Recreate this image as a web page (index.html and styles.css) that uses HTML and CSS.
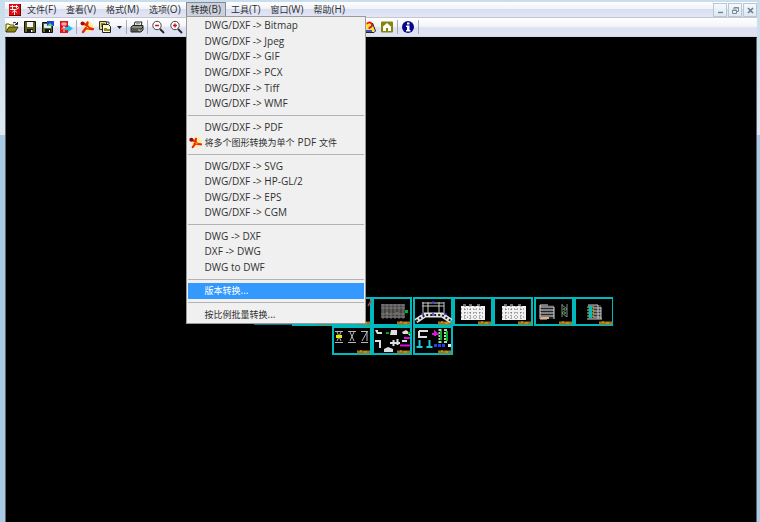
FILE: index.html
```html
<!DOCTYPE html>
<html lang="zh-CN">
<head>
<meta charset="utf-8">
<meta name="viewport" content="width=device-width, initial-scale=1">
<title>DWG/DXF</title>
<link rel="stylesheet" href="styles.css">
</head>
<body>
<div class="window">
  <header class="menubar">
    <svg class="app-icon" viewBox="0 0 12 12" aria-hidden="true"><rect width="12" height="12" fill="#d90f14"/><path d="M1 2.500h8M3.500 1v5M7.500 1v3M1 5.500h6l3-2M5.500 5v6M3 8.500l2.500-2L8 8.500" stroke="#fff" fill="none" stroke-width=".9"/><path d="M0 11.500h12M11.500 0v12" stroke="#700" stroke-width="1"/></svg>
    <nav class="menus">
      <button class="menu-button">文件<span>(F)</span></button>
      <button class="menu-button">查看<span>(V)</span></button>
      <button class="menu-button">格式<span>(M)</span></button>
      <button class="menu-button">选项<span>(O)</span></button>
      <div class="menu-anchor">
        <button class="menu-button open" aria-expanded="true">转换<span>(B)</span></button>
        <div class="dropdown" role="menu">
          <button class="item" role="menuitem"><span>DWG/DXF -&gt; Bitmap</span></button>
          <button class="item" role="menuitem"><span>DWG/DXF -&gt; Jpeg</span></button>
          <button class="item" role="menuitem"><span>DWG/DXF -&gt; GIF</span></button>
          <button class="item" role="menuitem"><span>DWG/DXF -&gt; PCX</span></button>
          <button class="item" role="menuitem"><span>DWG/DXF -&gt; Tiff</span></button>
          <button class="item" role="menuitem"><span>DWG/DXF -&gt; WMF</span></button>
          <div class="rule" role="separator"></div>
          <button class="item" role="menuitem"><span>DWG/DXF -&gt; PDF</span></button>
          <button class="item" role="menuitem"><svg class="item-icon" viewBox="0 0 14 14" aria-hidden="true"><circle cx="8" cy="6.500" r="5.500" fill="#fff08a"/><path d="M3 4l4 2 2 2.500 4 .5M7 6l.5-3M7 8l-3 4M6 8l6 1" stroke="#e8260f" stroke-width="2.200" fill="none" stroke-linecap="round"/><circle cx="2.500" cy="4" r="2.200" fill="#8e0c10"/><path d="M7 7.500l2 .5" stroke="#ffd53a"/></svg>将多个图形转换为单个<span class="mid">PDF</span>文件</button>
          <div class="rule" role="separator"></div>
          <button class="item" role="menuitem"><span>DWG/DXF -&gt; SVG</span></button>
          <button class="item" role="menuitem"><span>DWG/DXF -&gt; HP-GL/2</span></button>
          <button class="item" role="menuitem"><span>DWG/DXF -&gt; EPS</span></button>
          <button class="item" role="menuitem"><span>DWG/DXF -&gt; CGM</span></button>
          <div class="rule" role="separator"></div>
          <button class="item" role="menuitem"><span>DWG -&gt; DXF</span></button>
          <button class="item" role="menuitem"><span>DXF -&gt; DWG</span></button>
          <button class="item" role="menuitem"><span>DWG to DWF</span></button>
          <div class="rule" role="separator"></div>
          <button class="item selected" role="menuitem">版本转换<span>...</span></button>
          <div class="rule" role="separator"></div>
          <button class="item" role="menuitem">按比例批量转换<span>...</span></button>
        </div>
      </div>
      <button class="menu-button">工具<span>(T)</span></button>
      <button class="menu-button">窗口<span>(W)</span></button>
      <button class="menu-button">帮助<span>(H)</span></button>
    </nav>
    <div class="controls">
      <button class="control" aria-label="最小化"><svg viewBox="0 0 12 12"><path d="M4 8.500h5" stroke="#6f808d" stroke-width="1.400"/></svg></button>
      <button class="control" aria-label="还原"><svg viewBox="0 0 12 12"><path d="M5 5V3.500h4.500v4H8M5 4h4.500M3.500 6h4v3.500h-4zM3.500 6.500h4" stroke="#7c8c99" fill="none"/></svg></button>
      <button class="control" aria-label="关闭"><svg viewBox="0 0 12 12"><path d="M4 4l5 5M9 4l-5 5" stroke="#687987" stroke-width="1.600"/></svg></button>
    </div>
  </header>

  <div class="toolbar">
    <div class="tools">
      <button class="tool" aria-label="打开"><svg viewBox="0 0 14 14"><path d="M1 12V4h3l1 1h4v2" fill="#fff79a" stroke="#55500a"/><path d="M1 12l3-5h9l-3 5z" fill="#8c8616" stroke="#3c3905"/><path d="M8 3q2-2 4 1M12.500 2v2.500H10" stroke="#222" fill="none"/></svg></button>
      <button class="tool" aria-label="保存"><svg viewBox="0 0 14 14"><path d="M1.500 1.500h11v11h-11z" fill="#5e6412" stroke="#111"/><path d="M4 2h6v5H4z" fill="#f4f5f8"/><path d="M4 9h6v4H4z" fill="#171717"/><path d="M8 10h1.500v2H8z" fill="#fff"/></svg></button>
      <button class="tool" aria-label="另存为"><svg viewBox="0 0 14 14"><path d="M1.500 2.500h10v10h-10z" fill="#60651b" stroke="#111"/><path d="M3 4h7v4H3z" fill="#d5eef8"/><path d="M4 9h6v4H4z" fill="#111"/><path d="M6 1h7v5H6z" fill="#263de0"/><path d="M6 6l3-3 3 3z" fill="#4be069"/><path d="M8 10h1v2H8z" fill="#fff"/></svg></button>
      <button class="tool" aria-label="导出"><svg viewBox="0 0 14 14"><path d="M1 1h8v12H1z" fill="#df141b"/><path d="M2 4h6M4 2v4M6 2v4M5 6v6M2.500 9L5 7l2 2" stroke="#fff" stroke-width=".8" fill="none"/><path d="M9 5v2H6v3h3v2l5-3.500z" fill="#16c6dc"/></svg></button>
    </div>
    <div class="tools">
      <button class="tool" aria-label="PDF"><svg viewBox="0 0 14 14"><circle cx="8" cy="7" r="5" fill="#ffef7c"/><path d="M3 3l4 2.500L9 8l4 1M7 5.500l.5-3M6 8l-3 4M6 8l6 1" stroke="#e8260f" stroke-width="2.300" fill="none" stroke-linecap="round"/><circle cx="2.500" cy="3.500" r="2" fill="#a90c10"/><path d="M6.500 7l2 1" stroke="#ffd53a"/></svg></button>
      <button class="tool" aria-label="批量"><svg viewBox="0 0 14 14"><path d="M1.500 1.500h7v8h-7z" fill="#e7dc6a" stroke="#333"/><path d="M3 4h4M3 6h4" stroke="#333"/><path d="M4.500 4.500h6l2 2v6h-8z" fill="#faf8cf" stroke="#222"/><path d="M6 11V8h3v1h3v2z" fill="#8b892c"/><path d="M9 2h2v2" stroke="#333" fill="none"/></svg></button>
      <button class="arrow" aria-label="更多"><svg viewBox="0 0 7 14"><path d="M1 6h5L3.500 9z" fill="#222"/></svg></button>
    </div>
    <div class="tools">
      <button class="tool" aria-label="打印"><svg viewBox="0 0 14 14"><path d="M4 6l1-4h7l-1 4" fill="#fff" stroke="#222"/><path d="M6 3.500h4M5.500 5h4" stroke="#777" stroke-width=".7"/><path d="M1 7l2-1.500h10V10l-2 2H1z" fill="#8b8c87" stroke="#222"/><path d="M1 9h10l2-2M2 11h7" stroke="#222" fill="none"/><path d="M8 10h2" stroke="#d8d84a"/></svg></button>
    </div>
    <div class="tools">
      <button class="tool" aria-label="缩小"><svg viewBox="0 0 14 14"><circle cx="6" cy="5.500" r="4.200" fill="#fff" stroke="#444"/><path d="M9 9l4 4" stroke="#222" stroke-width="1.800"/><path d="M4 5.500h4" stroke="#d11622" stroke-width="1.500"/></svg></button>
      <button class="tool" aria-label="放大"><svg viewBox="0 0 14 14"><circle cx="6" cy="5.500" r="4.200" fill="#fff" stroke="#444"/><path d="M9 9l4 4" stroke="#222" stroke-width="1.800"/><path d="M4 5.500h4M6 3.500v4" stroke="#d11622" stroke-width="1.500"/></svg></button>
    </div>
    <div class="tools help-tools">
      <button class="tool" aria-label="帮助"><svg viewBox="0 0 14 14"><path d="M2 9l2-7h6l3 8-2 2H3z" fill="#ffe04a"/><path d="M5 4q2.500-3 4.500-.5T7.500 7.500V9" fill="none" stroke="#dc1919" stroke-width="1.800"/><path d="M10.500 3l3 8-1.500 1.500H2" fill="none" stroke="#222"/><path d="M3 10h7v2H3z" fill="#3c54c4"/></svg></button>
      <button class="tool" aria-label="主页"><svg viewBox="0 0 14 14"><rect x="1" y="1.500" width="12" height="11" rx="1" fill="#85850b"/><path d="M2.500 7L7 3l4.500 4H11v4H8V8H6v3H3V7z" fill="#fff"/></svg></button>
    </div>
    <div class="tools">
      <button class="tool" aria-label="关于"><svg viewBox="0 0 14 14"><circle cx="7" cy="7" r="6" fill="#06068c"/><path d="M6 2.500h2.500v2H6zM5 5.500h3.500V10h1v1.500H5V10h1V7H5z" fill="#fff"/></svg></button>
    </div>
  </div>

  <main class="canvas">
    <svg class="drawing" width="360" height="58" viewBox="0 0 360 58" role="img" aria-label="图纸">
      <defs>
        <g id="sheet"><rect x="1" y="1" width="38" height="27" fill="#000" stroke="#00b9bd" stroke-width="2"/><path d="M25 26h13" stroke="#a47210" stroke-width="3"/><path d="M28 25h2m2 1h3" stroke="#e0b028"/></g>
        <g id="plan"><path d="M8 9h24v14H8z" fill="#f2f2f2"/><path d="M8 12h24M8 16h24M8 20h24M12 9v14M17 9v14M22 9v14M27 9v14" stroke="#444" stroke-width=".8" stroke-dasharray="1 2"/><path d="M10 8h3m3 0h3m5 0h3" stroke="#ddd"/></g>
      </defs>
      <path d="M1 27.500h78" stroke="#04757a"/>
      <use href="#sheet" x="39"/><use href="#sheet" x="79"/>
      <path d="M115 9l3-5" stroke="#d83434" stroke-width="1.500"/>
      <use href="#sheet" x="119"/>
      <path d="M128 7h24v14h-24z" fill="#444"/><path d="M128 8h24M128 11h24M128 17h24M128 20h24M130 7v15M134 7v15M138 7v15M142 7v15M146 7v15M150 7v15" stroke="#858585" stroke-width=".8"/><path d="M152 14.500h3" stroke="#00b522" stroke-width="3"/><path d="M134 15v2m10-2v2" stroke="#b28044"/>
      <use href="#sheet" x="160"/>
      <path d="M169 6h22M169 9h22M170 5v12M175 5v12M186 5v12M191 5v12M170 17h21" fill="none" stroke="#c8c8c8"/><path d="M163 24l9-6h17l9 6" fill="none" stroke="#e4e4e4" stroke-width="5"/><path d="M163 24l9-6h17l9 6" fill="none" stroke="#222" stroke-width="2" stroke-dasharray="2 2"/><path d="M180 4v3m0 9v3m-12-2h3m20 0h3" stroke="#3432d9" stroke-width="1.500"/>
      <use href="#sheet" x="200"/><use href="#plan" x="200"/>
      <use href="#sheet" x="240"/><use href="#plan" x="241"/>
      <use href="#sheet" x="281"/>
      <path d="M287 8h14v14h-14z" fill="#252525"/><path d="M287 8h8M287 10h14M287 13h14M287 16h14M287 19h14M287 22h7M287 8v14M301 10v12" stroke="#ddd"/><path d="M288 21h8" stroke="#e3b185" stroke-width="2"/><path d="M309 7v13M314 7v13M309 8l5 4-5 4 5 4" fill="none" stroke="#888"/><path d="M311 11v2m1 2v2" stroke="#0a9e28" stroke-width="2"/>
      <use href="#sheet" x="321"/>
      <path d="M335 8h13v14h-13z" fill="#333"/><path d="M335 8h10M340 11h8M340 14h8M340 17h8M340 20h8M334 22h15M345 8v14M348 10v12" stroke="#ccc"/><path d="M337.500 9v12" stroke="#00bec7" stroke-width="3"/><path d="M335 9v12M340 9v12" stroke="#d5c91e" stroke-width="1" stroke-dasharray="2 1"/>
      <use href="#sheet" x="79" y="29"/>
      <g stroke="#b8b8b8" fill="none"><path d="M82 34.500h8M84 35l4 9M88 35l-4 9M82 45.500h8M95 34.500h8M97 35l4 9M101 35l-4 9M95 45.500h8M108 34.500h7M109 44l5-9M114 35v9M108 45.500h7"/></g><path d="M83 39.500h6" stroke="#e8e800" stroke-width="3"/>
      <use href="#sheet" x="119" y="29"/>
      <g fill="#dedede"><path d="M122 33h3v2h4v2h-5zM138 33h6v5h-7zM149 35l4-2 4 3v3l-2-2h-5zM122 43h6v8h-2v-6h-4zM131 52l4-2 5 2v3h-9zM137 45h10v2h-10z"/></g><path d="M140.500 43v6M144.500 42v6M149 44h5" stroke="#ddd" stroke-width="2"/><path d="M133 36h3M155 36h3" stroke="#00a51c" stroke-width="2"/><path d="M151 41h6M147 48.500h11" stroke="#d310d3" stroke-width="2"/>
      <use href="#sheet" x="160" y="29"/>
      <path d="M166 34v6h8M166 34h9" fill="none" stroke="#ddd" stroke-width="2"/><path d="M166.500 43v7m-3 0h6M176.500 43v7m-3 0h6" stroke="#21cbd4" stroke-width="2"/><path d="M179 37h5l-2-2v4" stroke="#da16db" stroke-width="2"/><path d="M187 32v14M192.500 32v14" stroke="#a6dfa6" stroke-width="3" stroke-dasharray="2 1"/><path d="M188 34v9M194 34v10" stroke="#0bae22" stroke-width="2"/><path d="M181 48.500h11" stroke="#2440ed" stroke-width="3" stroke-dasharray="3 1"/><path d="M195 48.500h3" stroke="#eee" stroke-width="3"/>
    </svg>
  </main>
</div>
</body>
</html>
```
FILE: styles.css
```css
* {
  box-sizing: border-box;
}

body {
  margin: 0;
  background: linear-gradient(#c9ddeb 0, #dde8f2 135px, #a9c9e5 135px);
  font-family: "Noto Sans CJK SC", sans-serif;
  font-size: 9px;
  color: #303030;
}

button {
  margin: 0;
  border: 0;
  padding: 0;
  background: none;
  color: inherit;
  font: inherit;
}

button span {
  font-family: "Open Sans", sans-serif;
  font-size: 10px;
}

svg {
  display: block;
}

.window {
  display: flex;
  flex-direction: column;
  min-height: 100vh;
  padding: 2px 3px 0 5px;
}

.menubar {
  display: flex;
  align-items: center;
  height: 16px;
  padding-left: 4px;
  background: linear-gradient(#fff, #f0f2fa 45%, #dadff0 50%, #e2e6f5);
  border-bottom: 1px solid #c2c7d3;
}

.app-icon {
  width: 12px;
  height: 12px;
}

.menus {
  display: flex;
  margin-left: 1px;
}

.menu-button {
  height: 15px;
  padding: 0 5px;
  line-height: 13px;
  white-space: nowrap;
}

.menu-anchor {
  position: relative;
}

.open {
  border: 1px solid #858a94;
  padding: 0 4px;
  background: #cbd0dc;
}

.dropdown {
  position: absolute;
  z-index: 2;
  top: 14px;
  left: 0;
  display: flex;
  flex-direction: column;
  width: 180px;
  min-height: 308px;
  padding: 1px;
  border: 1px solid #9a9a9a;
  background: #f0f0f0;
}

.item {
  position: relative;
  flex: 2 0 0;
  padding-left: 17px;
  line-height: 15px;
  text-align: left;
  white-space: nowrap;
}

.mid {
  margin: 0 3px;
}

.item-icon {
  position: absolute;
  left: 1px;
  top: 1px;
  width: 13px;
  height: 13px;
}

.rule {
  display: flex;
  flex: 1 0 0;
  align-items: center;
}

.rule::before {
  content: "";
  flex: 1;
  height: 1px;
  background: #b4b4b4;
}

.selected {
  background: #3399ff;
  color: #fff;
}

.controls {
  display: flex;
  gap: 1px;
  margin-left: auto;
}

.control {
  width: 14px;
  height: 14px;
  border: 1px solid #b7c7d5;
  background: linear-gradient(#f4f9fd, #dce9f3);
}

.toolbar {
  display: flex;
  align-items: center;
  height: 19px;
  background: linear-gradient(#fff, #f3f5fb 45%, #dde1f1 55%, #dfe3f3);
  border-bottom: 1px solid #d4d8e4;
}

.tools {
  display: flex;
  gap: 4px;
  padding: 0 3px;
  border-right: 1px solid #a7abb6;
}

.tools:first-child {
  padding-left: 0;
}

.tool,
.tool svg {
  width: 14px;
  height: 14px;
}

.arrow,
.arrow svg {
  width: 7px;
  height: 14px;
}

.help-tools {
  margin-left: 172px;
}

.canvas {
  position: relative;
  flex: 1;
  background: #000;
  border: 1px solid #5c6670;
  border-top-color: #000;
  border-bottom: 0;
}

.drawing {
  position: absolute;
  top: 259px;
  left: 247px;
}
```
